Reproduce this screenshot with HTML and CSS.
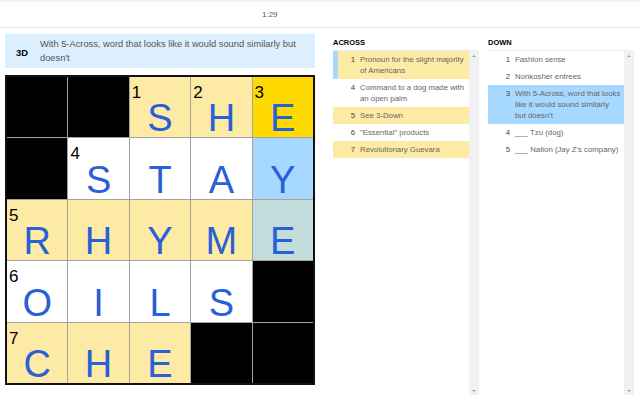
FILE: index.html
```html
<!DOCTYPE html>
<html lang="en">
<head>
  <meta charset="UTF-8">
  <title>Mini Crossword</title>
  <link rel="stylesheet" href="styles.css">
</head>
<body>
  <div class="toolbar">
    <span class="timer">1:29</span>
  </div>
  <main class="layout">
    <section class="board">
      <div class="cluebar">
        <span class="cluebar-num">3D</span>
        <span class="cluebar-text">With 5-Across, word that looks like it would sound similarly but doesn't</span>
      </div>
      <div class="grid">
        <div class="cell block"></div>
        <div class="cell block"></div>
        <div class="cell related"><span class="num">1</span><span class="letter">S</span></div>
        <div class="cell related"><span class="num">2</span><span class="letter">H</span></div>
        <div class="cell selected"><span class="num">3</span><span class="letter">E</span></div>

        <div class="cell block"></div>
        <div class="cell"><span class="num">4</span><span class="letter">S</span></div>
        <div class="cell"><span class="letter">T</span></div>
        <div class="cell"><span class="letter">A</span></div>
        <div class="cell highlighted"><span class="letter">Y</span></div>

        <div class="cell related"><span class="num">5</span><span class="letter">R</span></div>
        <div class="cell related"><span class="letter">H</span></div>
        <div class="cell related"><span class="letter">Y</span></div>
        <div class="cell related"><span class="letter">M</span></div>
        <div class="cell overlap"><span class="letter">E</span></div>

        <div class="cell"><span class="num">6</span><span class="letter">O</span></div>
        <div class="cell"><span class="letter">I</span></div>
        <div class="cell"><span class="letter">L</span></div>
        <div class="cell"><span class="letter">S</span></div>
        <div class="cell block"></div>

        <div class="cell related"><span class="num">7</span><span class="letter">C</span></div>
        <div class="cell related"><span class="letter">H</span></div>
        <div class="cell related"><span class="letter">E</span></div>
        <div class="cell block"></div>
        <div class="cell block"></div>
      </div>
    </section>

    <section class="clues">
      <h3 class="clues-title">ACROSS</h3>
      <div class="clues-box">
        <ol class="clue-list">
          <li class="clue related active"><span class="clue-num">1</span><span class="clue-text">Pronoun for the slight majority of Americans</span></li>
          <li class="clue"><span class="clue-num">4</span><span class="clue-text">Command to a dog made with an open palm</span></li>
          <li class="clue related"><span class="clue-num">5</span><span class="clue-text">See 3-Down</span></li>
          <li class="clue"><span class="clue-num">6</span><span class="clue-text">"Essential" products</span></li>
          <li class="clue related"><span class="clue-num">7</span><span class="clue-text">Revolutionary Guevara</span></li>
        </ol>
        <div class="scrollbar"><span class="arrow up"></span><span class="arrow down"></span></div>
      </div>
    </section>

    <section class="clues down">
      <h3 class="clues-title">DOWN</h3>
      <div class="clues-box">
        <ol class="clue-list">
          <li class="clue"><span class="clue-num">1</span><span class="clue-text">Fashion sense</span></li>
          <li class="clue"><span class="clue-num">2</span><span class="clue-text">Nonkosher entrees</span></li>
          <li class="clue current"><span class="clue-num">3</span><span class="clue-text">With 5-Across, word that looks like it would sound similarly but doesn't</span></li>
          <li class="clue"><span class="clue-num">4</span><span class="clue-text">___ Tzu (dog)</span></li>
          <li class="clue"><span class="clue-num">5</span><span class="clue-text">___ Nation (Jay Z's company)</span></li>
        </ol>
        <div class="scrollbar"><span class="arrow up"></span><span class="arrow down"></span></div>
      </div>
    </section>
  </main>
</body>
</html>
```

FILE: styles.css
```css
body {
  margin: 0;
  height: 396px;
  overflow: hidden;
  background: #fff;
  font-family: "Liberation Sans", Arial, sans-serif;
  color: #333;
}
.toolbar {
  height: 25px;
  border-top: 2px solid #f1f1f1;
  border-bottom: 1px solid #e8e8e8;
  display: flex;
  align-items: center;
  padding-left: 262px;
}
.timer {
  font-size: 8px;
  color: #555;
}
.layout {
  display: flex;
  padding: 6px 0 0 5px;
}
.board {
  width: 310px;
  flex: none;
}
.cluebar {
  height: 34px;
  background: #dcefff;
  display: flex;
  align-items: center;
  padding: 0 8px 0 11px;
  box-sizing: border-box;
}
.cluebar-num {
  width: 24px;
  flex: none;
  font-size: 9.4px;
  font-weight: bold;
  color: #000;
  padding-top: 3px;
}
.cluebar-text {
  font-size: 9.3px;
  line-height: 14px;
  color: #555;
}
.grid {
  margin-top: 7px;
  width: 310px;
  height: 310px;
  box-sizing: border-box;
  border: 2px solid #111;
  background: #a3a3a3;
  display: grid;
  grid-template-columns: repeat(5, 1fr);
  grid-template-rows: repeat(5, 1fr);
  gap: 1px;
}
.cell {
  position: relative;
  background: #fff;
  display: flex;
  align-items: flex-end;
  justify-content: center;
}
.cell.block { background: #000; }
.cell.related { background: #fdeaa5; }
.cell.selected { background: #ffda00; }
.cell.highlighted { background: #a7d8ff; }
.cell.overlap { background: #c5dcdd; }
.num {
  position: absolute;
  top: 7px;
  left: 2px;
  font-size: 17px;
  line-height: 1;
  color: #000;
}
.letter {
  font-size: 38px;
  line-height: 1;
  color: #2860d8;
}
.clues {
  width: 146px;
  flex: none;
  margin-left: 18px;
}
.clues.down {
  margin-left: 9px;
}
.clues-title {
  margin: 0;
  height: 16px;
  padding-top: 3px;
  box-sizing: border-box;
  font-size: 7.5px;
  line-height: 12px;
  font-weight: bold;
  color: #000;
}
.clues-box {
  display: flex;
  height: 345px;
}
.clue-list {
  flex: 1;
  margin: 0;
  padding: 0;
  list-style: none;
  border-top: 1px solid #ececec;
}
.clue {
  display: flex;
  padding: 3px 3px 3px 0;
  border-left: 5px solid transparent;
  font-size: 7.8px;
  line-height: 11px;
}
.clue.related { background: #fdeaa5; }
.clue.active { border-left-color: #a7d8ff; }
.clue.current { background: #a7d8ff; }
.clue-num {
  width: 17px;
  flex: none;
  text-align: right;
  margin-right: 5px;
  color: #444;
}
.clue-text {
  color: #666;
}
.scrollbar {
  width: 10px;
  flex: none;
  background: #f1f1f1;
  display: flex;
  flex-direction: column;
  justify-content: space-between;
  align-items: center;
  padding: 5px 0 3px;
  box-sizing: border-box;
}
.arrow {
  width: 0;
  height: 0;
  border-left: 2px solid transparent;
  border-right: 2px solid transparent;
}
.arrow.up { border-bottom: 2px solid #a0a0a0; }
.arrow.down { border-top: 2px solid #a0a0a0; }
```
